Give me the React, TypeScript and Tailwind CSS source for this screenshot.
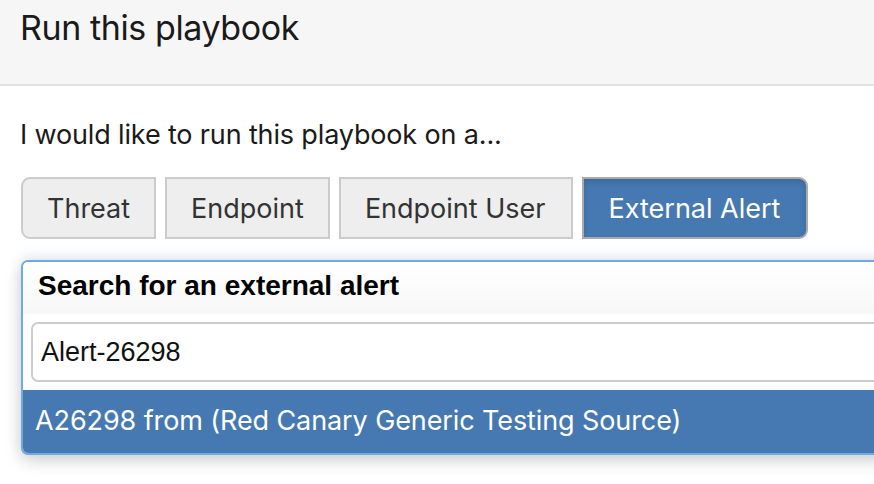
import React from "react";

export default function App() {
  const btn =
    "h-[62px] px-[24px] border-2 text-[27px] leading-none flex items-center";
  return (
    <div className="w-[874px] h-[484px] overflow-hidden bg-white text-[#222]" style={{ fontFamily: "'Liberation Sans', Arial, sans-serif" }}>
      <div className="h-[86px] bg-[#f6f6f6] border-b-2 border-[#e2e2e2] pl-[20px] pt-[8px]">
        <h1 className="text-[34px] leading-[40px] text-[#1a1a1a]" style={{ fontFamily: "Inter, sans-serif", fontWeight: 400, letterSpacing: "-0.4px" }}>Run this playbook</h1>
      </div>
      <div className="pl-[20px] pt-[34px]">
        <p className="text-[27px] leading-[30px] text-[#1a1a1a]" style={{ fontFamily: "Inter, sans-serif", letterSpacing: "-0.15px" }}>I would like to run this playbook on a...</p>
        <div className="flex gap-[9px] mt-[27px] ml-[1px]" style={{ fontFamily: "Inter, sans-serif" }}>
          <div className={`${btn} bg-[#eeeeee] border-[#cccccc] text-[#333] rounded-l-[9px]`}>Threat</div>
          <div className={`${btn} bg-[#eeeeee] border-[#cccccc] text-[#333]`}>Endpoint</div>
          <div className={`${btn} bg-[#eeeeee] border-[#cccccc] text-[#333] pr-[26px]`}>Endpoint User</div>
          <div className={`${btn} bg-[#4679b2] border-[#aaaaaa] text-white rounded-r-[9px] shadow-[inset_0_3px_6px_rgba(0,0,0,0.15)] pr-[26px]`}>External Alert</div>
        </div>
        <div className="mt-[21px] ml-[1px] w-[900px] border-2 border-[#72a9e2] rounded-[7px] overflow-hidden shadow-[0_6px_16px_rgba(0,0,0,0.18),0_-4px_14px_rgba(70,130,200,0.12)] bg-white">
          <div className="h-[52px] bg-gradient-to-b from-white to-[#f7f7f7] pl-[15px] pt-[8px]">
            <div className="text-[28px] leading-[32px] font-bold text-black">Search for an external alert</div>
          </div>
          <div className="pl-[8px] pt-[8px] pb-[8px] bg-white">
            <div className="h-[60px] border-2 border-[#cccccc] rounded-[7px] flex items-center pl-[8px] text-[27px] text-[#111]" style={{ fontFamily: "'Liberation Sans', Arial, sans-serif" }}>Alert-26298</div>
          </div>
          <div className="h-[63px] bg-[#4679b2] flex items-center pl-[12px] text-[27px] text-white" style={{ fontFamily: "Inter, sans-serif", letterSpacing: "-0.1px" }}>A26298 from (Red Canary Generic Testing Source)</div>
        </div>
      </div>
    </div>
  );
}
